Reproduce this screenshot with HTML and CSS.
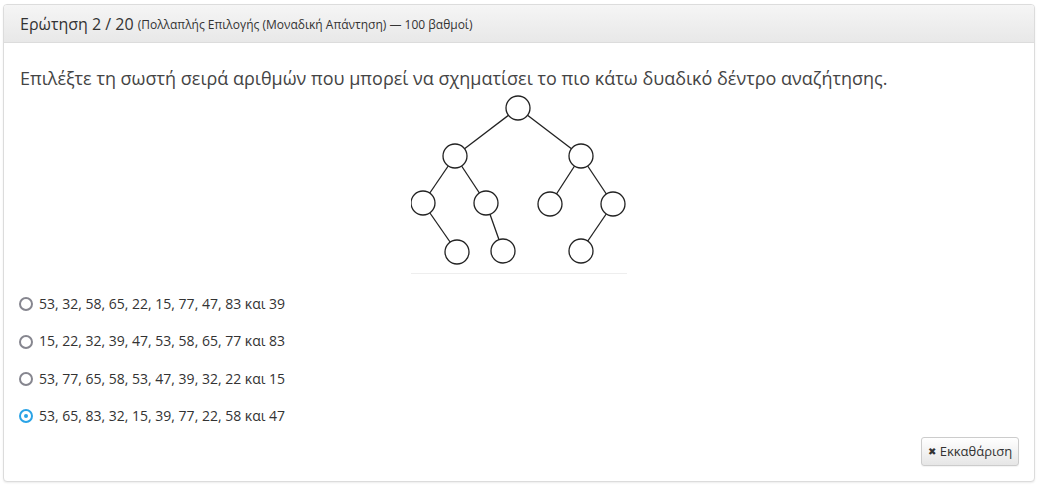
FILE: index.html
```html
<!DOCTYPE html>
<html lang="el">
<head>
<meta charset="utf-8">
<link rel="stylesheet" href="styles.css">
</head>
<body>
<div class="panel">
  <div class="panel-heading">
    <span class="title">Ερώτηση 2 / 20</span>
    <small class="meta">(Πολλαπλής Επιλογής (Μοναδική Απάντηση) — 100 βαθμοί)</small>
  </div>
  <div class="panel-body">
    <p class="question">Επιλέξτε τη σωστή σειρά αριθμών που μπορεί να σχηματίσει το πιο κάτω δυαδικό δέντρο αναζήτησης.</p>
    <div class="figure">
      <svg class="tree" width="216" height="180" viewBox="0 0 216 180">
        <g class="edges">
          <line x1="107" y1="15" x2="44" y2="63"/>
          <line x1="107" y1="15" x2="170" y2="63"/>
          <line x1="44" y1="63" x2="12" y2="110"/>
          <line x1="44" y1="63" x2="75" y2="110"/>
          <line x1="170" y1="63" x2="139" y2="111"/>
          <line x1="170" y1="63" x2="202" y2="111"/>
          <line x1="12" y1="110" x2="46" y2="159"/>
          <line x1="75" y1="110" x2="92" y2="158"/>
          <line x1="202" y1="111" x2="170" y2="158"/>
        </g>
        <g class="nodes">
          <circle cx="107" cy="15" r="12"/>
          <circle cx="44" cy="63" r="12"/>
          <circle cx="170" cy="63" r="12"/>
          <circle cx="12" cy="110" r="12"/>
          <circle cx="75" cy="110" r="12"/>
          <circle cx="139" cy="111" r="12"/>
          <circle cx="202" cy="111" r="12"/>
          <circle cx="46" cy="159" r="12"/>
          <circle cx="92" cy="158" r="12"/>
          <circle cx="170" cy="158" r="12"/>
        </g>
      </svg>
    </div>
    <div class="options">
      <label class="option"><span class="radio"></span><span>53, 32, 58, 65, 22, 15, 77, 47, 83 και 39</span></label>
      <label class="option"><span class="radio"></span><span>15, 22, 32, 39, 47, 53, 58, 65, 77 και 83</span></label>
      <label class="option"><span class="radio"></span><span>53, 77, 65, 58, 53, 47, 39, 32, 22 και 15</span></label>
      <label class="option"><span class="radio checked"></span><span>53, 65, 83, 32, 15, 39, 77, 22, 58 και 47</span></label>
    </div>
    <div class="actions">
      <button class="btn"><span class="x">✖</span> Εκκαθάριση</button>
    </div>
  </div>
</div>
</body>
</html>
```
FILE: styles.css
```css
html, body {
  margin: 0;
  padding: 0;
  background: #ffffff;
}
body {
  padding: 4px 6px 6px 3px;
  font-family: "Open Sans", "Noto Sans", sans-serif;
  color: #333;
}
.panel {
  border: 1px solid #dcdcdc;
  border-radius: 4px;
  background: #fff;
  box-shadow: 0 1px 2px rgba(0,0,0,0.08);
}
.panel-heading {
  height: 38px;
  box-sizing: border-box;
  padding: 0 16px;
  display: flex;
  align-items: center;
  gap: 4px;
  background: linear-gradient(#f5f5f5, #e8e8e8);
  border-bottom: 1px solid #dcdcdc;
  border-radius: 3px 3px 0 0;
}
.title {
  font-size: 16px;
  color: #333;
}
.meta {
  font-size: 12px;
  color: #333;
  padding-top: 2px;
}
.panel-body {
  padding: 22px 16px 15px 16px;
}
.question {
  margin: 0;
  font-size: 18px;
  line-height: 26px;
  color: #444;
}
.figure {
  display: flex;
  justify-content: center;
  margin-top: 2px;
}
.tree {
  display: block;
  border-bottom: 1px solid #eee;
}
.tree .edges line {
  stroke: #222;
  stroke-width: 1.3;
}
.tree .nodes circle {
  fill: #fff;
  stroke: #222;
  stroke-width: 1.3;
}
.options {
  margin-top: 19px;
  display: flex;
  flex-direction: column;
  gap: 15px;
}
.option {
  display: flex;
  align-items: center;
  gap: 6px;
  font-size: 14px;
  line-height: 22.4px;
  color: #333;
  margin-left: -1px;
}
.radio {
  width: 14px;
  height: 14px;
  box-sizing: border-box;
  border: 2px solid #86868f;
  border-radius: 50%;
  flex: none;
  position: relative;
}
.radio.checked {
  border-color: #2aa3e6;
}
.radio.checked::after {
  content: "";
  position: absolute;
  left: 3px;
  top: 3px;
  width: 4px;
  height: 4px;
  border-radius: 50%;
  background: #2aa3e6;
}
.actions {
  display: flex;
  justify-content: flex-end;
  margin-top: 9px;
}
.btn {
  height: 29px;
  width: 98px;
  margin-right: -1px;
  border: 1px solid #cccccc;
  border-radius: 3px;
  background: linear-gradient(#ffffff, #e6e6e6);
  font-family: "Open Sans", "Noto Sans", sans-serif;
  font-size: 13px;
  color: #333;
  padding: 0;
  display: flex;
  align-items: center;
  justify-content: center;
  gap: 4px;
  box-shadow: 0 1px 1px rgba(0,0,0,0.05);
}
.btn .x {
  font-size: 10px;
  color: #333;
}
```
